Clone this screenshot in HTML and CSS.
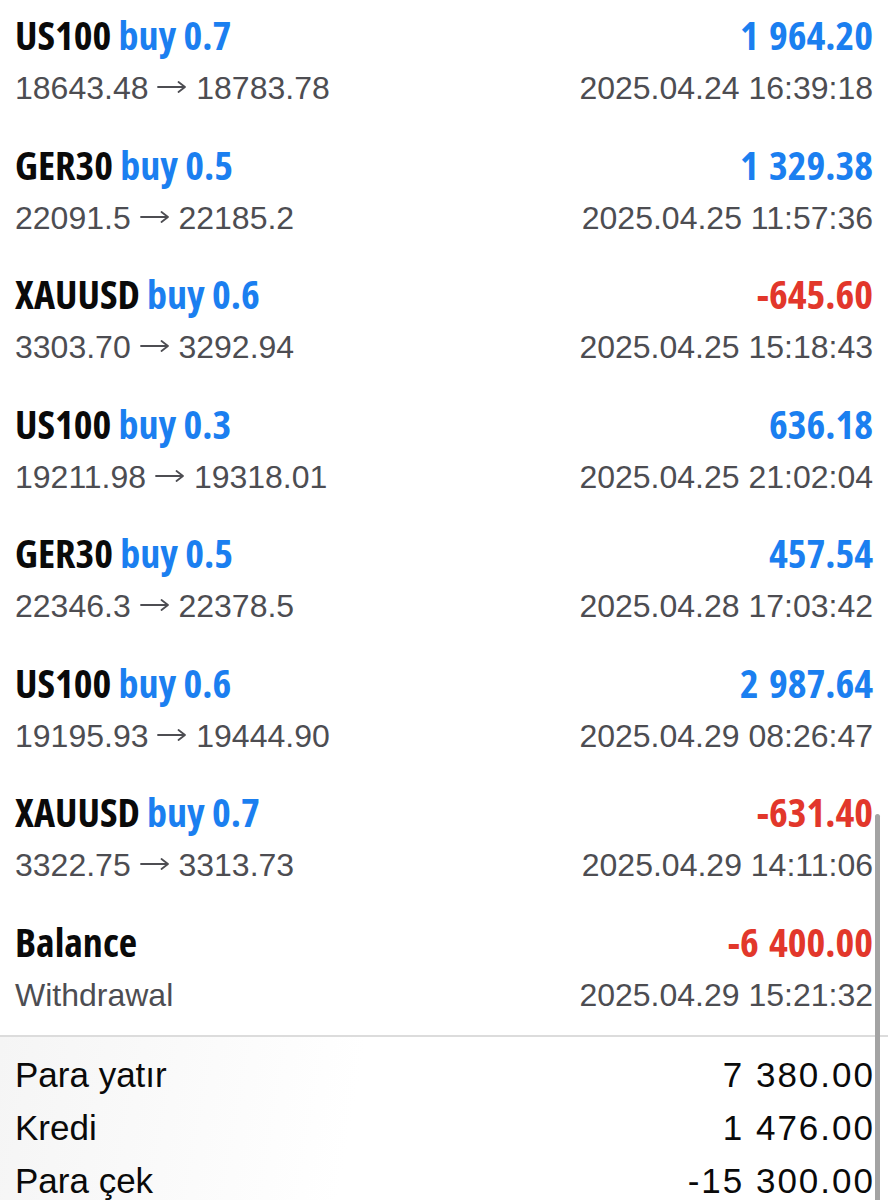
FILE: index.html
```html
<!DOCTYPE html>
<html lang="tr">
<head>
    <meta charset="UTF-8">
    <meta name="viewport" content="width=device-width, initial-scale=1.0">
    <title>Geçmiş</title>
    <link rel="stylesheet" href="styles.css">
</head>
<body>
    <div class="history">
        <div class="deal">
            <div class="line">
                <span class="title">US100 <span class="buy">buy 0.7</span></span>
                <span class="amount profit">1 964.20</span>
            </div>
            <div class="line sub">
                <span>18643.48 <svg class="arrow" viewBox="0 0 30 14"><path d="M1 7H28M21.5 2L28 7L21.5 12"/></svg> 18783.78</span>
                <span>2025.04.24 16:39:18</span>
            </div>
        </div>
        <div class="deal">
            <div class="line">
                <span class="title">GER30 <span class="buy">buy 0.5</span></span>
                <span class="amount profit">1 329.38</span>
            </div>
            <div class="line sub">
                <span>22091.5 <svg class="arrow" viewBox="0 0 30 14"><path d="M1 7H28M21.5 2L28 7L21.5 12"/></svg> 22185.2</span>
                <span>2025.04.25 11:57:36</span>
            </div>
        </div>
        <div class="deal">
            <div class="line">
                <span class="title">XAUUSD <span class="buy">buy 0.6</span></span>
                <span class="amount loss">-645.60</span>
            </div>
            <div class="line sub">
                <span>3303.70 <svg class="arrow" viewBox="0 0 30 14"><path d="M1 7H28M21.5 2L28 7L21.5 12"/></svg> 3292.94</span>
                <span>2025.04.25 15:18:43</span>
            </div>
        </div>
        <div class="deal">
            <div class="line">
                <span class="title">US100 <span class="buy">buy 0.3</span></span>
                <span class="amount profit">636.18</span>
            </div>
            <div class="line sub">
                <span>19211.98 <svg class="arrow" viewBox="0 0 30 14"><path d="M1 7H28M21.5 2L28 7L21.5 12"/></svg> 19318.01</span>
                <span>2025.04.25 21:02:04</span>
            </div>
        </div>
        <div class="deal">
            <div class="line">
                <span class="title">GER30 <span class="buy">buy 0.5</span></span>
                <span class="amount profit">457.54</span>
            </div>
            <div class="line sub">
                <span>22346.3 <svg class="arrow" viewBox="0 0 30 14"><path d="M1 7H28M21.5 2L28 7L21.5 12"/></svg> 22378.5</span>
                <span>2025.04.28 17:03:42</span>
            </div>
        </div>
        <div class="deal">
            <div class="line">
                <span class="title">US100 <span class="buy">buy 0.6</span></span>
                <span class="amount profit">2 987.64</span>
            </div>
            <div class="line sub">
                <span>19195.93 <svg class="arrow" viewBox="0 0 30 14"><path d="M1 7H28M21.5 2L28 7L21.5 12"/></svg> 19444.90</span>
                <span>2025.04.29 08:26:47</span>
            </div>
        </div>
        <div class="deal">
            <div class="line">
                <span class="title">XAUUSD <span class="buy">buy 0.7</span></span>
                <span class="amount loss">-631.40</span>
            </div>
            <div class="line sub">
                <span>3322.75 <svg class="arrow" viewBox="0 0 30 14"><path d="M1 7H28M21.5 2L28 7L21.5 12"/></svg> 3313.73</span>
                <span>2025.04.29 14:11:06</span>
            </div>
        </div>
        <div class="deal last">
            <div class="line">
                <span class="title">Balance</span>
                <span class="amount loss">-6 400.00</span>
            </div>
            <div class="line sub">
                <span>Withdrawal</span>
                <span>2025.04.29 15:21:32</span>
            </div>
        </div>
    </div>

    <div class="summary">
        <div class="sum-row"><span>Para yatır</span><span class="sum-value">7 380.00</span></div>
        <div class="sum-row"><span>Kredi</span><span class="sum-value">1 476.00</span></div>
        <div class="sum-row"><span>Para çek</span><span class="sum-value">-15 300.00</span></div>
    </div>

    <div class="scrollbar"></div>
</body>
</html>
```

FILE: styles.css
```css
body {
    margin: 0;
    padding: 0;
    background-color: #ffffff;
    color: #0a0a0a;
    font-family: 'Liberation Sans', Arial, sans-serif;
    overflow: hidden;
    position: relative;
    height: 1200px;
}
.history {
    padding: 0 15px;
}
.deal {
    height: 129.5px;
    box-sizing: border-box;
    padding-top: 11px;
}
.deal.last {
    height: 128px;
}
.line {
    display: flex;
    justify-content: space-between;
    align-items: baseline;
}
.title, .amount {
    font-family: 'Open Sans', 'DejaVu Sans Condensed', sans-serif;
    font-stretch: 75%;
    font-weight: bold;
    font-size: 40px;
    line-height: 48px;
}
.amount {
    word-spacing: 3px;
}
.buy, .profit {
    color: #1b7ff0;
}
.loss {
    color: #e2372b;
}
.sub {
    font-size: 32px;
    line-height: 59px;
    color: #4d4d52;
}
.arrow {
    width: 30px;
    height: 14px;
    vertical-align: 5px;
    fill: none;
    stroke: #4d4d52;
    stroke-width: 1.8;
    stroke-linecap: round;
    stroke-linejoin: round;
}
.summary {
    border-top: 2px solid #dcdcdc;
    padding: 11px 15px 0;
    background: linear-gradient(100deg, #f5f5f5 0%, #ffffff 40%);
}
.sum-row {
    display: flex;
    justify-content: space-between;
    font-size: 35px;
    line-height: 53px;
    color: #0a0a0a;
}
.sum-value {
    letter-spacing: 2px;
    margin-right: -2px;
}
.scrollbar {
    position: absolute;
    top: 814px;
    right: 8px;
    width: 5px;
    height: 400px;
    border-radius: 3px;
    background-color: #a3a3a3;
}
```
